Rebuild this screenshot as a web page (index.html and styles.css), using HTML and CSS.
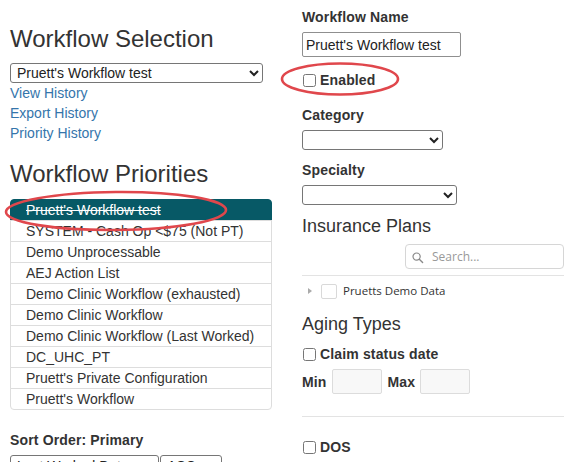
FILE: index.html
```html
<!DOCTYPE html>
<html>
<head>
<meta charset="utf-8">
<link rel="stylesheet" href="styles.css">
</head>
<body>
<div class="page">
  <div class="col left">
    <h1 class="title first">Workflow Selection</h1>
    <select class="wf-select"><option>Pruett's Workflow test</option></select>
    <div class="links">
      <a href="#">View History</a>
      <a href="#">Export History</a>
      <a href="#">Priority History</a>
    </div>
    <h1 class="title second">Workflow Priorities</h1>
    <ul class="list">
      <li class="item active">Pruett's Workflow test</li>
      <li class="item">SYSTEM - Cash Op &lt;$75 (Not PT)</li>
      <li class="item">Demo Unprocessable</li>
      <li class="item">AEJ Action List</li>
      <li class="item">Demo Clinic Workflow (exhausted)</li>
      <li class="item">Demo Clinic Workflow</li>
      <li class="item">Demo Clinic Workflow (Last Worked)</li>
      <li class="item">DC_UHC_PT</li>
      <li class="item">Pruett's Private Configuration</li>
      <li class="item">Pruett's Workflow</li>
    </ul>
    <div class="label sort-label">Sort Order: Primary</div>
    <div class="sort-row">
      <select class="sort-field"><option>Last Worked Date</option></select>
      <select class="sort-dir"><option>ASC</option></select>
    </div>
  </div>
  <div class="col right">
    <div class="label name-label">Workflow Name</div>
    <input class="name-input" type="text" value="Pruett's Workflow test">
    <label class="check-row enabled"><input type="checkbox" class="cb">Enabled</label>
    <div class="label cat-label">Category</div>
    <select class="cat-select"><option></option></select>
    <div class="label spec-label">Specialty</div>
    <select class="spec-select"><option></option></select>
    <h2 class="subtitle ins">Insurance Plans</h2>
    <div class="search-wrap">
      <div class="search">
        <svg class="search-icon" width="12" height="12" viewBox="0 0 12 12"><circle cx="4.6" cy="4.6" r="3.6" fill="none" stroke="#8a8a8a" stroke-width="1.2"/><line x1="7.3" y1="7.3" x2="10.6" y2="10.6" stroke="#8a8a8a" stroke-width="1.4" stroke-linecap="round"/></svg>
        <span class="placeholder">Search...</span>
      </div>
    </div>
    <div class="rule rule1"></div>
    <div class="tree-row">
      <span class="caret"></span>
      <span class="tree-box"></span>
      <span class="tree-text">Pruetts Demo Data</span>
    </div>
    <h2 class="subtitle aging">Aging Types</h2>
    <label class="check-row claim"><input type="checkbox" class="cb">Claim status date</label>
    <div class="minmax">
      <span class="label">Min</span>
      <input type="text" class="small-input">
      <span class="label max">Max</span>
      <input type="text" class="small-input">
    </div>
    <div class="rule rule2"></div>
    <label class="check-row dos"><input type="checkbox" class="cb">DOS</label>
  </div>
  <svg class="annot" width="577" height="462" viewBox="0 0 577 462">
    <ellipse cx="116" cy="211" rx="110" ry="19" fill="none" stroke="#e0474c" stroke-width="2.6" transform="rotate(-0.5 116 211)"/>
    <ellipse cx="340" cy="79" rx="58" ry="15.5" fill="none" stroke="#e0474c" stroke-width="2.6"/>
  </svg>
</div>
</body>
</html>
```

FILE: styles.css
```css
* { box-sizing: border-box; }
html, body { margin: 0; padding: 0; background: #fff; }
body {
  font-family: "Liberation Sans", Arial, sans-serif;
  font-size: 14px;
  color: #333;
  overflow: hidden;
}
.page {
  position: relative;
  width: 577px;
  height: 462px;
  overflow: hidden;
  display: grid;
  grid-template-columns: 262px 262px;
  column-gap: 30px;
  padding-left: 10px;
  align-items: start;
}
.col { display: flex; flex-direction: column; align-items: flex-start; }
.left { padding-top: 26px; }
.right { padding-top: 7px; }

.title {
  font-size: 24px;
  font-weight: normal;
  line-height: 26px;
  margin: 0;
  color: #333;
}
.title.second { margin-top: 18px; }

select, input { font-family: "Liberation Sans", Arial, sans-serif; font-size: 14px; color: #222; }
select {
  height: 20px;
  border: 1px solid #767676;
  border-radius: 3px;
  background: #fff;
  padding: 0 0 0 2px;
  margin: 0;
}
.wf-select { width: 253px; margin-top: 11px; }

.links { display: flex; flex-direction: column; }
.links a {
  color: #3575ab;
  text-decoration: none;
  line-height: 20px;
}

.list {
  list-style: none;
  margin: 12px 0 0 0;
  padding: 0;
  width: 262px;
}
.item {
  line-height: 20px;
  padding: 0 15px;
  border: 1px solid #ddd;
  margin-bottom: -1px;
  background: #fff;
  color: #333;
}
.item:first-child { border-radius: 4px 4px 0 0; }
.item:last-child { border-radius: 0 0 4px 4px; margin-bottom: 0; }
.item.active {
  background: #075966;
  border-color: #075966;
  color: #fff;
  text-decoration: line-through;
}

.label {
  font-weight: bold;
  line-height: 20px;
  color: #333;
  letter-spacing: 0.15px;
}
.sort-label { margin-top: 20px; }
.sort-row { display: flex; margin-top: 5px; }
.sort-field { width: 149px; height: 22px; }
.sort-dir { width: 62px; height: 22px; margin-left: 1px; }

.name-input {
  margin-top: 5px;
  width: 159px;
  height: 25px;
  border: 1px solid #8f8f8f;
  border-radius: 2px;
  padding: 0 3px;
}
.check-row {
  display: flex;
  align-items: center;
  font-weight: bold;
  line-height: 20px;
  letter-spacing: 0.15px;
}
.cb { width: 13px; height: 13px; margin: 0 4px 0 1px; }
.enabled { margin-top: 13px; }
.cat-label { margin-top: 15px; }
.cat-select { width: 141px; margin-top: 5px; height: 20px; }
.spec-label { margin-top: 10px; }
.spec-select { width: 155px; margin-top: 5px; height: 20px; }

.subtitle {
  font-size: 18px;
  font-weight: normal;
  line-height: 20px;
  margin: 0;
  color: #333;
}
.ins { margin-top: 11px; }
.search-wrap { width: 262px; display: flex; justify-content: flex-end; margin-top: 8px; }
.search {
  width: 159px;
  height: 25px;
  border: 1px solid #d6d6d6;
  border-radius: 4px;
  display: flex;
  align-items: center;
  padding-left: 6px;
}
.search-icon { margin-top: 3px; }
.placeholder {
  font-family: "Open Sans", "Liberation Sans", sans-serif;
  font-size: 12px;
  color: #999;
  margin-left: 8px;
}
.rule { width: 262px; height: 1px; background: #e3e3e3; }
.rule1 { margin-top: 6px; }
.tree-row {
  display: flex;
  align-items: center;
  height: 20px;
  margin-top: 5px;
}
.caret {
  width: 0; height: 0;
  border-left: 4px solid #aaa;
  border-top: 3.5px solid transparent;
  border-bottom: 3.5px solid transparent;
  margin-left: 6px;
}
.tree-box {
  width: 16px; height: 15px;
  border: 1px solid #d9d9d9;
  border-radius: 2px;
  margin-left: 9px;
  background: #fff;
}
.tree-text {
  font-family: "Open Sans", "Liberation Sans", sans-serif;
  font-size: 11.5px;
  color: #333;
  margin-left: 6px;
  margin-top: -2px;
}
.aging { margin-top: 13px; }
.claim { margin-top: 10px; }
.minmax { display: flex; align-items: center; margin-top: 5px; }
.small-input {
  width: 50px;
  height: 25px;
  border: 1px solid #dcdcdc;
  border-radius: 2px;
  background: #f8f8f8;
  margin-left: 5px;
}
.max { margin-left: 6px; }
.rule2 { margin-top: 22px; }
.dos { margin-top: 20px; }

.annot {
  position: absolute;
  left: 0; top: 0;
  pointer-events: none;
}
```
